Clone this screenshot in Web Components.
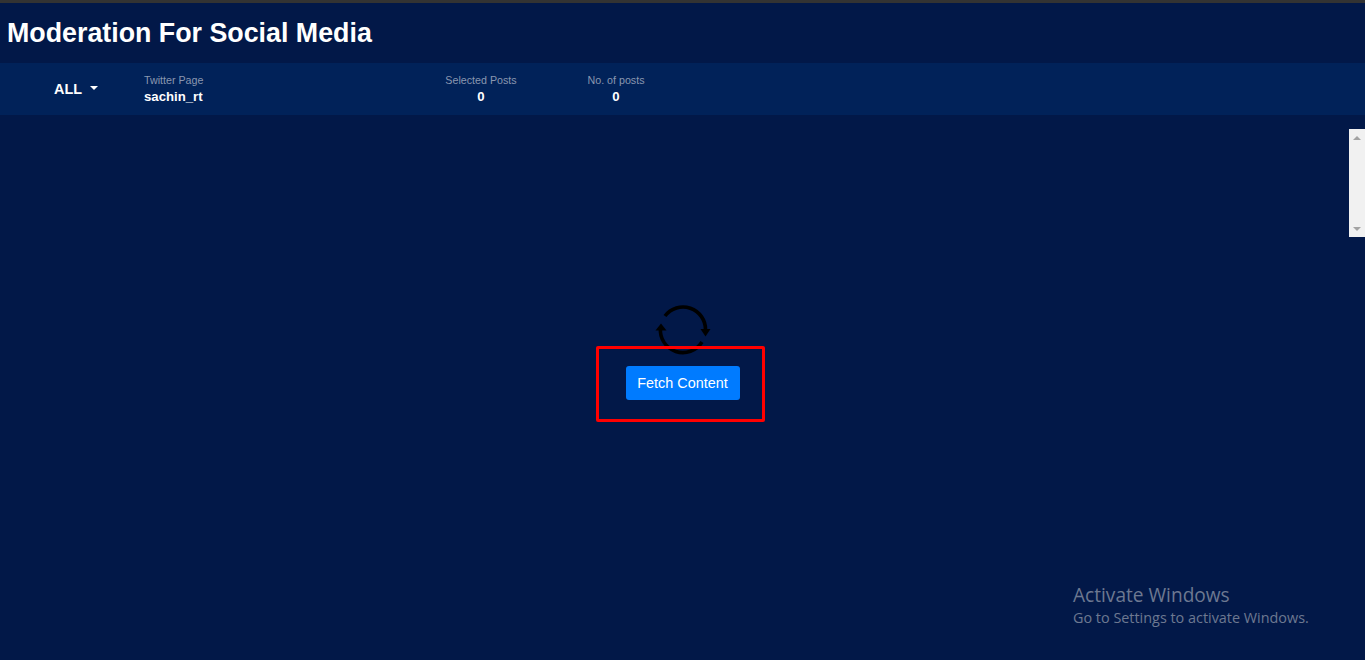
<!DOCTYPE html>
<html>
<head>
<meta charset="utf-8">
<title>Moderation For Social Media</title>
<style>
    html, body { margin: 0; height: 100%; overflow: hidden; background: #021848; font-family: "Liberation Sans", Arial, sans-serif; }
</style>
</head>
<body>
<mod-app>
    <page-title slot="head">Moderation For Social Media</page-title>
    <info-bar slot="head">
        <filter-menu label="ALL"></filter-menu>
        <info-stat label="Twitter Page" value="sachin_rt" align="left" width="301"></info-stat>
        <info-stat label="Selected Posts" value="0" align="center" width="72"></info-stat>
        <info-stat label="No. of posts" value="0" align="center" width="58" gap="70"></info-stat>
    </info-bar>
    <fetch-panel></fetch-panel>
    <mini-scrollbar slot="over"></mini-scrollbar>
    <activate-mark slot="over"></activate-mark>
</mod-app>
<script>
class ModApp extends HTMLElement {
    constructor() {
        super();
        this.attachShadow({ mode: 'open' });
        this.shadowRoot.innerHTML = `
            <style>
                :host { display: flex; flex-direction: column; height: 660px; position: relative; overflow: hidden; border-top: 3px solid #333; box-sizing: border-box; }
                main { flex: 1; display: flex; justify-content: center; }
            </style>
            <slot name="head"></slot>
            <main><slot></slot></main>
            <slot name="over"></slot>
        `;
    }
}
customElements.define('mod-app', ModApp);

class PageTitle extends HTMLElement {
    constructor() {
        super();
        this.attachShadow({ mode: 'open' });
        this.shadowRoot.innerHTML = `
            <style>
                :host { display: flex; align-items: center; height: 59px; padding: 1px 0 0 7px; color: #fff; font-size: 26.8px; font-weight: 700; }
            </style>
            <slot></slot>
        `;
    }
}
customElements.define('page-title', PageTitle);

class InfoBar extends HTMLElement {
    constructor() {
        super();
        this.attachShadow({ mode: 'open' });
        this.shadowRoot.innerHTML = `
            <style>
                :host { display: flex; align-items: center; height: 52px; padding-left: 54px; background: #012259; }
            </style>
            <slot></slot>
        `;
    }
}
customElements.define('info-bar', InfoBar);

class FilterMenu extends HTMLElement {
    constructor() {
        super();
        this.attachShadow({ mode: 'open' });
    }
    connectedCallback() {
        this.shadowRoot.innerHTML = `
            <style>
                :host { display: flex; align-items: center; width: 90px; color: #fff; font-size: 14.4px; font-weight: 700; }
                i { width: 0; height: 0; margin-left: 8px; margin-bottom: 2px; border: 4px solid transparent; border-top-color: #fff; border-bottom: 0; }
            </style>
            <span>${this.getAttribute('label')}</span><i></i>
        `;
    }
}
customElements.define('filter-menu', FilterMenu);

class InfoStat extends HTMLElement {
    constructor() {
        super();
        this.attachShadow({ mode: 'open' });
    }
    connectedCallback() {
        const align = this.getAttribute('align');
        this.shadowRoot.innerHTML = `
            <style>
                :host { display: block; flex: none; width: ${this.getAttribute('width')}px; margin-left: ${this.getAttribute('gap') || 0}px; text-align: ${align}; margin-top: 2px; white-space: nowrap; }
                .label { color: #8a97b0; font-size: 10.7px; line-height: 13px; }
                .value { color: #fff; font-size: 13.2px; font-weight: 700; line-height: 20px; }
            </style>
            <div class="label">${this.getAttribute('label')}</div>
            <div class="value">${this.getAttribute('value')}</div>
        `;
    }
}
customElements.define('info-stat', InfoStat);

class FetchPanel extends HTMLElement {
    constructor() {
        super();
        this.attachShadow({ mode: 'open' });
        this.shadowRoot.innerHTML = `
            <style>
                :host { display: flex; flex-direction: column; align-items: center; margin-top: 189px; position: relative; }
                svg { display: block; width: 56px; height: 52px; }
                button { margin-top: 10px; width: 114px; height: 34px; padding: 0; border: 0; border-radius: 3px; background: #007bff; color: #fff; font: 14.4px "Liberation Sans", Arial, sans-serif; }
                .mark { position: absolute; left: 50%; top: 42px; width: 169px; height: 76px; margin-left: -87px; box-sizing: border-box; border: 3px solid #f00; border-radius: 2px; }
            </style>
            <svg viewBox="0 0 56 52" fill="none">
                <path d="M10 12 A22.5 22.5 0 0 1 50.5 26" stroke="#000" stroke-width="3.6"/>
                <path d="M47 38 A22.5 22.5 0 0 1 5.5 24" stroke="#000" stroke-width="3.6"/>
                <path d="M45.5 25 H55.5 L50.5 32.5 Z" fill="#000"/>
                <path d="M0.5 26.5 H11.5 L6 19.5 Z" fill="#000"/>
            </svg>
            <button>Fetch Content</button>
            <div class="mark"></div>
        `;
    }
}
customElements.define('fetch-panel', FetchPanel);

class MiniScrollbar extends HTMLElement {
    constructor() {
        super();
        this.attachShadow({ mode: 'open' });
        this.shadowRoot.innerHTML = `
            <style>
                :host { position: absolute; right: 0; top: 126px; width: 16px; height: 108px; background: #f1f1f1; display: flex; flex-direction: column; justify-content: space-between; align-items: center; padding: 7px 0 6px; box-sizing: border-box; }
                i { width: 0; height: 0; border-left: 4px solid transparent; border-right: 4px solid transparent; }
                .up { border-bottom: 4px solid #a3a3a3; }
                .down { border-top: 4px solid #a3a3a3; }
            </style>
            <i class="up"></i><i class="down"></i>
        `;
    }
}
customElements.define('mini-scrollbar', MiniScrollbar);

class ActivateMark extends HTMLElement {
    constructor() {
        super();
        this.attachShadow({ mode: 'open' });
        this.shadowRoot.innerHTML = `
            <style>
                :host { position: absolute; left: 1073px; top: 579px; color: #6d7891; font-family: "Open Sans", "Noto Sans", sans-serif; white-space: nowrap; }
                div { font-size: 19.1px; line-height: 26px; }
                small { display: block; font-size: 14.4px; line-height: 20px; }
            </style>
            <div>Activate Windows</div>
            <small>Go to Settings to activate Windows.</small>
        `;
    }
}
customElements.define('activate-mark', ActivateMark);
</script>
</body>
</html>
